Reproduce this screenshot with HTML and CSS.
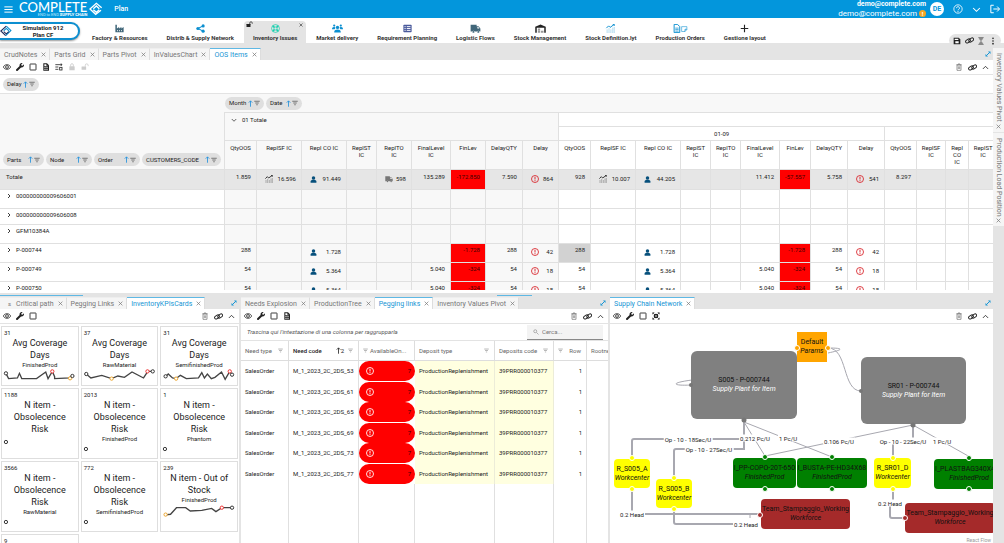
FILE: index.html
```html
<!DOCTYPE html>
<html lang="it">
<head>
<meta charset="utf-8">
<title>Complete - Plan</title>
<link rel="stylesheet" href="styles.css">
</head>
<body>
<svg class="sprite" aria-hidden="true">
  <symbol id="menu" viewBox="0 0 24 24"><path d="M1 5h22M1 12h22M1 19h22" stroke="currentColor" stroke-width="2.6"/></symbol>
  <symbol id="diamond" viewBox="0 0 42 38"><g fill="none" stroke="currentColor" stroke-width="4"><path d="M38 15 22 2 3 19l17 16 16-12"/><path d="M13 18 22 10l9 8M31 21l-9 8-9-8"/></g></symbol>
  <symbol id="diamond-duo" viewBox="0 0 42 38"><g fill="none" stroke-width="4"><path d="M22 2 3 19l17 16" stroke="#1d2c5e"/><path d="M22 2l16 15-18 18" stroke="#0d8fd0"/><path d="M13 18 22 10l9 8" stroke="#0d8fd0"/><path d="M31 21l-9 8-9-8" stroke="#1d2c5e"/></g></symbol>
  <symbol id="help" viewBox="0 0 24 24"><circle cx="12" cy="12" r="10" fill="none" stroke="currentColor" stroke-width="2"/><path d="M8.500 10a3.500 3.500 0 1 1 5 3c-1 .6-1.500 1-1.500 2.200" fill="none" stroke="currentColor" stroke-width="2"/><circle cx="12" cy="18" r="1.300" fill="currentColor"/></symbol>
  <symbol id="down" viewBox="0 0 24 24"><path d="m3 8 9 9 9-9" fill="none" stroke="currentColor" stroke-width="2.800"/></symbol>
  <symbol id="up" viewBox="0 0 24 24"><path d="m3 17 9-9 9 9" fill="none" stroke="currentColor" stroke-width="2.800"/></symbol>
  <symbol id="right" viewBox="0 0 24 24"><path d="m8 4 8 8-8 8" fill="none" stroke="currentColor" stroke-width="3.500"/></symbol>
  <symbol id="logout" viewBox="0 0 24 24"><path d="M9 3H2v18h7M8 12h14M17 6l6 6-6 6" fill="none" stroke="currentColor" stroke-width="2.400"/></symbol>
  <symbol id="industry" viewBox="0 0 24 24"><path d="M1 2h4v10l6-4v4l6-4v4l6-4v14H1z" fill="currentColor"/><path d="M6 16h2v3H6zM11 16h2v3h-2zM16 16h2v3h-2z" fill="#fff"/></symbol>
  <symbol id="share" viewBox="0 0 24 24"><path d="M19 5 5 12l14 7" fill="none" stroke="currentColor" stroke-width="2.800"/><circle cx="5" cy="12" r="4.200" fill="currentColor"/><circle cx="19" cy="5" r="4.200" fill="currentColor"/><circle cx="19" cy="19" r="4.200" fill="currentColor"/></symbol>
  <symbol id="ring" viewBox="0 0 24 24"><g fill="none" stroke="currentColor" stroke-width="2"><circle cx="12" cy="12" r="10.500"/><circle cx="12" cy="12" r="4"/><path d="m5 5 4 4M19 5l-4 4M5 19l4-4M19 19l-4-4" stroke-width="4"/></g></symbol>
  <symbol id="users" viewBox="0 0 30 24"><g fill="currentColor"><circle cx="6" cy="4" r="3"/><circle cx="24" cy="4" r="3"/><circle cx="15" cy="9" r="4.500"/><path d="M0 14c0-4 2-6 5-6s4 1 4 3l-2 3zM30 14c0-4-2-6-5-6s-4 1-4 3l2 3zM6 23c0-6 3-8 9-8s9 2 9 8z"/></g></symbol>
  <symbol id="list" viewBox="0 0 24 24"><path d="M3 2h18q2 0 2 2v16q0 2-2 2H3q-2 0-2-2V4q0-2 2-2z" fill="currentColor"/><path d="M4 7h3M10 7h10M4 12h3M10 12h10M4 17h3M10 17h10" stroke="#fff" stroke-width="2.500"/></symbol>
  <symbol id="truck" viewBox="0 0 28 24"><path d="M1 2h16v4h5l5 6v8h-2a4 4 0 0 0-7 0h-6a4 4 0 0 0-7 0H1z" fill="currentColor"/><path d="M19 8h2.500l3 4H19z" fill="#fff"/><circle cx="8.500" cy="21" r="2.600" fill="currentColor"/><circle cx="21.500" cy="21" r="2.600" fill="currentColor"/></symbol>
  <symbol id="warehouse" viewBox="0 0 28 24"><path d="M0 23V7l14-6 14 6v16h-4V10H4v13z" fill="currentColor"/><path d="M7 12h6v5H7zM7 18h6v5H7zM15 18h7v5h-7z" fill="#999"/></symbol>
  <symbol id="chart" viewBox="0 0 24 24"><path d="m1 11 6-6 4 4L22 1M22 5V1h-4" fill="none" stroke="currentColor" stroke-width="2.600"/><path d="M3 23v-8M8 23V12M13 23v-8M18 23V10M22 23V8" stroke="currentColor" stroke-width="2.400" stroke-dasharray="2 1" opacity=".55"/></symbol>
  <symbol id="docs" viewBox="0 0 38 24"><g fill="none" stroke="currentColor"><path d="M2 1h9l6 6v16H2z" stroke-width="2.600"/><path d="M5 11h9M5 15h9M5 19h9" stroke-width="2"/><path d="M22 7h14v8l-5 5h-9z" stroke-width="1.500"/><path d="M36 14h-5v6" stroke-width="2"/></g></symbol>
  <symbol id="plus" viewBox="0 0 24 24"><path d="M12 2v20M2 12h20" stroke="currentColor" stroke-width="3"/></symbol>
  <symbol id="save" viewBox="0 0 24 24"><path d="M2 2h15l5 5v15H2z" fill="currentColor"/><path d="M5 5h11v4H5zM7 13h10v6H7z" fill="#fff"/></symbol>
  <symbol id="link" viewBox="0 0 28 24"><g fill="none" stroke="currentColor" stroke-width="3"><rect x="1" y="9" width="16" height="9" rx="4.500" transform="rotate(-35 9 13)"/><rect x="11" y="6" width="16" height="9" rx="4.500" transform="rotate(-35 19 10)"/></g></symbol>
  <symbol id="hourglass" viewBox="0 0 24 24"><path d="M4 2h16M4 22h16" stroke="currentColor" stroke-width="3"/><path d="M6 3c0 6 5 6 5 9s-5 3-5 9h12c0-6-5-6-5-9s5-3 5-9z" fill="currentColor" opacity=".8"/></symbol>
  <symbol id="dots" viewBox="0 0 24 24"><g fill="currentColor"><circle cx="12" cy="4" r="2.500"/><circle cx="12" cy="12" r="2.500"/><circle cx="12" cy="20" r="2.500"/></g></symbol>
  <symbol id="eye" viewBox="0 0 24 24"><path fill="none" stroke="currentColor" stroke-width="2.200" d="M1 12c2.500-5 6-7 11-7s8.500 2 11 7c-2.500 5-6 7-11 7s-8.500-2-11-7z"/><circle cx="12" cy="12" r="4.500" fill="none" stroke="currentColor" stroke-width="2.200"/><circle cx="12" cy="12" r="1.500" fill="currentColor"/></symbol>
  <symbol id="wrench" viewBox="0 0 512 512"><path fill="currentColor" d="M507.730 109.100c-2.240-9.030-13.540-12.090-20.120-5.510l-74.360 74.360-67.880-11.310-11.310-67.880 74.360-74.360c6.620-6.620 3.430-17.900-5.660-20.160-47.380-11.740-99.550.91-136.580 37.930-39.640 39.640-50.550 97.100-34.050 147.200L18.740 402.760c-24.990 24.990-24.990 65.510 0 90.500 24.990 24.990 65.510 24.990 90.500 0l213.210-213.210c50.120 16.710 107.470 5.680 147.370-34.220 37.070-37.070 49.700-89.320 37.910-136.730z"/></symbol>
  <symbol id="square" viewBox="0 0 24 24"><rect x="3" y="3" width="18" height="18" rx="1" fill="none" stroke="currentColor" stroke-width="2.600"/></symbol>
  <symbol id="xls" viewBox="0 0 24 24"><path d="M4 1h11l6 6v16H4z" fill="currentColor"/><path d="M7 4h6v4h4v2H7zM7 13h4v3H7zM13 13h4v3h-4zM7 18h4v2H7zM13 18h4v2h-4z" fill="#fff"/></symbol>
  <symbol id="tune" viewBox="0 0 24 24"><g fill="none" stroke="currentColor" stroke-width="2.400"><path d="M1 5h20M17 1l4 4-4 4M1 12h9M1 19h9"/><rect x="14" y="13" width="7" height="8"/></g></symbol>
  <symbol id="lock" viewBox="0 0 24 24"><rect x="4" y="10" width="16" height="12" rx="1" fill="currentColor"/><path d="M8 11V6a4 4 0 0 1 8 0v5" fill="none" stroke="currentColor" stroke-width="2.500"/></symbol>
  <symbol id="unlock" viewBox="0 0 28 24"><rect x="2" y="10" width="16" height="12" rx="1" fill="currentColor"/><path d="M15 11V6a5 5 0 0 1 10 0v3" fill="none" stroke="currentColor" stroke-width="2.800"/></symbol>
  <symbol id="trash" viewBox="0 0 24 24"><path d="M6 6h12v16H6zM4 5h16M9 3h6M10 10v8M14 10v8" fill="none" stroke="currentColor" stroke-width="2.200"/></symbol>
  <symbol id="expand" viewBox="0 0 24 24"><path d="M12 2h10v10zM2 12v10h10z" fill="currentColor"/><path d="M6 18 18 6" stroke="currentColor" stroke-width="4"/></symbol>
  <symbol id="filter" viewBox="0 0 24 24"><path d="M1 5h22M5 12h14M9 19h6" stroke="currentColor" stroke-width="4"/></symbol>
  <symbol id="arrow" viewBox="0 0 16 24"><path d="M8 23V3M2 9l6-6 6 6" fill="none" stroke="currentColor" stroke-width="2.800"/></symbol>
  <symbol id="person" viewBox="0 0 24 24"><circle cx="12" cy="7" r="6" fill="currentColor"/><path d="M7 13h10l5 4v6H2v-6z" fill="currentColor"/></symbol>
  <symbol id="alert" viewBox="0 0 24 24"><circle cx="12" cy="12" r="10.500" fill="none" stroke="currentColor" stroke-width="2.600"/><path d="M12 5.500v8M12 15.500v3" stroke="currentColor" stroke-width="2.800"/></symbol>
  <symbol id="search" viewBox="0 0 24 24"><circle cx="9" cy="9" r="6" fill="none" stroke="currentColor" stroke-width="2.500"/><path d="m14 14 8 8" stroke="currentColor" stroke-width="2.500"/></symbol>
  <symbol id="focus" viewBox="0 0 24 24"><path d="M2 7V2h5M17 2h5v5M22 17v5h-5M7 22H2v-5M3 3l18 18M21 3 3 21" fill="none" stroke="currentColor" stroke-width="2"/><circle cx="12" cy="12" r="7" fill="currentColor"/><circle cx="12" cy="12" r="2.500" fill="#fff"/></symbol>
  <symbol id="x" viewBox="0 0 24 24"><path d="m3 3 18 18M21 3 3 21" stroke="currentColor" stroke-width="3.400"/></symbol>
</svg>

<header class="topbar">
  <button class="btn" aria-label="Menu"><svg class="ic i9"><use href="#menu"/></svg></button>
  <div class="brand"><div class="brand-words"><span class="brand-name">COMPLETE</span><span class="brand-sub">END to END <b>SUPPLY CHAIN</b></span></div><svg class="brand-mark"><use href="#diamond"/></svg></div>
  <span class="section">Plan</span>
  <div class="account"><b>demo@complete.com</b><span>demo@complete.com <i class="warn">!</i></span></div>
  <span class="avatar">DE</span>
  <button class="btn" aria-label="Guida"><svg class="ic i10"><use href="#help"/></svg></button>
  <button class="btn" aria-label="Apri"><svg class="ic i9"><use href="#down"/></svg></button>
  <button class="btn" aria-label="Esci"><svg class="ic i10"><use href="#logout"/></svg></button>
</header>

<nav class="nav">
  <button class="sim"><svg class="sim-mark"><use href="#diamond-duo"/></svg><span>Simulation 912<br>Plan CF</span></button>
  <a class="nav-item c-slate" href="#"><svg><use href="#industry"/></svg><span>Factory &amp; Resources</span></a>
  <a class="nav-item c-blue" href="#"><svg><use href="#share"/></svg><span>Distrib &amp; Supply Network</span></a>
  <a class="nav-item c-teal active" href="#"><svg><use href="#ring"/></svg><span>Inventory Issues</span><i class="pin"><svg class="ic i7"><use href="#unlock"/></svg></i><i class="shut"><svg class="ic i4"><use href="#x"/></svg></i></a>
  <a class="nav-item c-blue" href="#"><svg><use href="#users"/></svg><span>Market delivery</span></a>
  <a class="nav-item c-indigo" href="#"><svg><use href="#list"/></svg><span>Requirement Planning</span></a>
  <a class="nav-item c-slate" href="#"><svg><use href="#truck"/></svg><span>Logistic Flows</span></a>
  <a class="nav-item c-dark" href="#"><svg><use href="#warehouse"/></svg><span>Stock Management</span></a>
  <a class="nav-item c-blue" href="#"><svg><use href="#chart"/></svg><span>Stock Definition.lyt</span></a>
  <a class="nav-item c-blue" href="#"><svg class="wide"><use href="#docs"/></svg><span>Production Orders</span></a>
  <a class="nav-item c-dark" href="#"><svg><use href="#plus"/></svg><span>Gestione layout</span></a>
  <div class="float-tools">
    <button class="btn" aria-label="Salva"><svg class="ic i8"><use href="#save"/></svg></button>
    <button class="btn" aria-label="Collega"><svg class="ic i9"><use href="#link"/></svg></button>
    <button class="btn" aria-label="Attesa"><svg class="ic i8 muted"><use href="#hourglass"/></svg></button>
    <button class="btn" aria-label="Altro"><svg class="ic i8"><use href="#dots"/></svg></button>
  </div>
</nav>

<div class="work">
<main class="main">
  <section class="panel upper">
    <div class="tabs">
      <button class="tab">CrudNotes<svg><use href="#x"/></svg></button><button class="tab">Parts Grid<svg><use href="#x"/></svg></button><button class="tab">Parts Pivot<svg><use href="#x"/></svg></button><button class="tab">InValuesChart<svg><use href="#x"/></svg></button><button class="tab on">OOS Items<svg><use href="#x"/></svg></button>
      <svg class="ic i6 grow-ic"><use href="#expand"/></svg>
    </div>
    <div class="tools">
      <svg class="ic i8"><use href="#eye"/></svg><svg class="ic i8"><use href="#wrench"/></svg><svg class="ic i8"><use href="#square"/></svg><svg class="ic i8"><use href="#xls"/></svg><svg class="ic i8"><use href="#tune"/></svg><svg class="ic i8 off"><use href="#lock"/></svg><svg class="ic i8 off"><use href="#unlock"/></svg>
      <span class="spring"></span>
      <svg class="ic i8 muted"><use href="#trash"/></svg><svg class="ic i9"><use href="#link"/></svg><svg class="ic i7"><use href="#up"/></svg>
    </div>
    <div class="chips filters"><button class="chip w36">Delay<span><svg class="asc"><use href="#arrow"/></svg><svg><use href="#filter"/></svg></span></button></div>
    <div class="chips colfields"><button class="chip w39">Month<span><svg class="asc"><use href="#arrow"/></svg><svg><use href="#filter"/></svg></span></button><button class="chip w36">Date<span><svg class="asc"><use href="#arrow"/></svg><svg><use href="#filter"/></svg></span></button></div>
    <div class="pivot-wrap">
    <table class="pivot">
      <colgroup><col class="p225"><col class="p32"><col class="p45"><col class="p45"><col class="p30"><col class="p35"><col class="p39"><col class="p35"><col class="p37"><col class="p36"><col class="p32"><col class="p45"><col class="p45"><col class="p30"><col class="p30"><col class="p39"><col class="p31"><col class="p37"><col class="p37"><col class="p32"><col class="p29"><col class="p23"><col class="p29"></colgroup>
      <thead>
        <tr class="h15"><td class="fields" rowspan="3"><div class="chips rowfields"><button class="chip w41">Parts<span><svg class="asc"><use href="#arrow"/></svg><svg><use href="#filter"/></svg></span></button><button class="chip w46">Node<span><svg class="asc"><use href="#arrow"/></svg><svg><use href="#filter"/></svg></span></button><button class="chip w46">Order<span><svg class="asc"><use href="#arrow"/></svg><svg><use href="#filter"/></svg></span></button><button class="chip w79">CUSTOMERS_CODE<span><svg class="asc"><use href="#arrow"/></svg><svg><use href="#filter"/></svg></span></button></div></td>
          <th class="t grp" colspan="9" rowspan="2"><svg class="ic i6"><use href="#down"/></svg>01 Totale</th><th colspan="13"></th></tr>
        <tr class="h14"><th class="day" colspan="9">01-09</th><th colspan="4"></th></tr>
        <tr class="h29"><th class="t">QtyOOS</th><th class="t">ReplSF IC</th><th class="t">Repl CO IC</th><th class="t">ReplST IC</th><th class="t">ReplTO IC</th><th class="t">FinalLevel IC</th><th class="t">FinLev</th><th class="t">DelayQTY</th><th class="t">Delay</th><th>QtyOOS</th><th>ReplSF IC</th><th>Repl CO IC</th><th>ReplST IC</th><th>ReplTO IC</th><th>FinalLevel IC</th><th>FinLev</th><th>DelayQTY</th><th>Delay</th><th>QtyOOS</th><th>ReplSF IC</th><th>Repl CO IC</th><th>ReplST IC</th></tr>
      </thead>
      <tbody>
        <tr class="sum h20"><td class="name">Totale</td><td>1.859</td><td><div class="pair"><svg class="ic i8"><use href="#chart"/></svg>16.596</div></td><td><div class="pair"><svg class="ic i7 navy"><use href="#person"/></svg>91.449</div></td><td></td><td><div class="pair"><svg class="ic i8 muted"><use href="#truck"/></svg>598</div></td><td>135.289</td><td class="bad">-172.850</td><td>7.590</td><td><div class="pair"><svg class="ic i8 red"><use href="#alert"/></svg>864</div></td><td>928</td><td><div class="pair"><svg class="ic i8"><use href="#chart"/></svg>10.007</div></td><td><div class="pair"><svg class="ic i7 navy"><use href="#person"/></svg>44.205</div></td><td></td><td></td><td>11.412</td><td class="bad">-57.557</td><td>5.758</td><td><div class="pair"><svg class="ic i8 red"><use href="#alert"/></svg>541</div></td><td>8.297</td><td></td><td></td><td></td></tr>
        <tr class="h19"><td class="name"><svg class="ic i6"><use href="#right"/></svg>000000000009606001</td><td class="t"></td><td class="t"></td><td class="t"></td><td class="t"></td><td class="t"></td><td class="t"></td><td class="t"></td><td class="t"></td><td class="t"></td><td></td><td></td><td></td><td></td><td></td><td></td><td></td><td></td><td></td><td></td><td></td><td></td><td></td></tr>
        <tr class="h16"><td class="name"><svg class="ic i6"><use href="#right"/></svg>000000000009606008</td><td class="t"></td><td class="t"></td><td class="t"></td><td class="t"></td><td class="t"></td><td class="t"></td><td class="t"></td><td class="t"></td><td class="t"></td><td></td><td></td><td></td><td></td><td></td><td></td><td></td><td></td><td></td><td></td><td></td><td></td><td></td></tr>
        <tr class="h19"><td class="name"><svg class="ic i6"><use href="#right"/></svg>GFM10384A</td><td class="t"></td><td class="t"></td><td class="t"></td><td class="t"></td><td class="t"></td><td class="t"></td><td class="t"></td><td class="t"></td><td class="t"></td><td></td><td></td><td></td><td></td><td></td><td></td><td></td><td></td><td></td><td></td><td></td><td></td><td></td></tr>
        <tr class="h19"><td class="name"><svg class="ic i6"><use href="#right"/></svg>P-000744</td><td class="t">288</td><td class="t"></td><td class="t"><div class="pair"><svg class="ic i7 navy"><use href="#person"/></svg>1.728</div></td><td class="t"></td><td class="t"></td><td class="t"></td><td class="bad">-1.728</td><td class="t">288</td><td class="t"><div class="pair"><svg class="ic i8 red"><use href="#alert"/></svg>42</div></td><td class="sel">288</td><td></td><td><div class="pair"><svg class="ic i7 navy"><use href="#person"/></svg>1.728</div></td><td></td><td></td><td></td><td class="bad">-1.728</td><td>288</td><td><div class="pair"><svg class="ic i8 red"><use href="#alert"/></svg>42</div></td><td></td><td></td><td></td><td></td></tr>
        <tr class="h19"><td class="name"><svg class="ic i6"><use href="#right"/></svg>P-000749</td><td class="t">54</td><td class="t"></td><td class="t"><div class="pair"><svg class="ic i7 navy"><use href="#person"/></svg>5.364</div></td><td class="t"></td><td class="t"></td><td class="t">5.040</td><td class="bad">-324</td><td class="t">54</td><td class="t"><div class="pair"><svg class="ic i8 red"><use href="#alert"/></svg>18</div></td><td>54</td><td></td><td><div class="pair"><svg class="ic i7 navy"><use href="#person"/></svg>5.364</div></td><td></td><td></td><td>5.040</td><td class="bad">-324</td><td>54</td><td><div class="pair"><svg class="ic i8 red"><use href="#alert"/></svg>18</div></td><td></td><td></td><td></td><td></td></tr>
        <tr class="h19"><td class="name"><svg class="ic i6"><use href="#right"/></svg>P-000750</td><td class="t">54</td><td class="t"></td><td class="t"><div class="pair"><svg class="ic i7 navy"><use href="#person"/></svg>5.364</div></td><td class="t"></td><td class="t"></td><td class="t">5.040</td><td class="bad">-324</td><td class="t">54</td><td class="t"><div class="pair"><svg class="ic i8 red"><use href="#alert"/></svg>18</div></td><td>54</td><td></td><td><div class="pair"><svg class="ic i7 navy"><use href="#person"/></svg>5.364</div></td><td></td><td></td><td>5.040</td><td class="bad">-324</td><td>54</td><td><div class="pair"><svg class="ic i8 red"><use href="#alert"/></svg>18</div></td><td></td><td></td><td></td><td></td></tr>
      </tbody>
    </table>
    </div>
  </section>

  <div class="split"><span class="mark first"></span><span class="mark second"></span></div>

  <div class="lower">
    <section class="panel">
      <div class="tabs low">
        <button class="tab lead"><small>s</small></button><button class="tab">Critical path<svg><use href="#x"/></svg></button><button class="tab">Pegging Links<svg><use href="#x"/></svg></button><button class="tab on">InventoryKPIsCards<svg><use href="#x"/></svg></button>
        <svg class="ic i6 grow-ic"><use href="#expand"/></svg>
      </div>
      <div class="tools">
        <svg class="ic i8"><use href="#eye"/></svg><svg class="ic i8"><use href="#wrench"/></svg><svg class="ic i8"><use href="#square"/></svg><span class="spring"></span><svg class="ic i8 muted"><use href="#trash"/></svg><svg class="ic i9"><use href="#link"/></svg><svg class="ic i7"><use href="#up"/></svg>
      </div>
      <div class="cards">
        <article class="card"><small>31</small><h3>Avg Coverage Days</h3><p>FinishedProd</p>
          <svg class="spark" viewBox="5 236 230 42"><polyline points="17,252 25,268 52,266 58,252 65,268 110,268 138,248 145,268 158,246 165,262 165,268 212,266 218,260"/><circle cx="17" cy="252" r="5"/><circle class="hi" cx="158" cy="246" r="5"/><circle class="lo" cx="212" cy="267" r="5"/><circle cx="219" cy="260" r="5"/></svg></article>
        <article class="card"><small>37</small><h3>Avg Coverage Days</h3><p>RawMaterial</p>
          <svg class="spark" viewBox="243 236 230 42"><polyline points="256,254 270,266 303,258 333,268 352,260 372,264 395,248 430,266 443,246 458,246"/><circle cx="256" cy="254" r="5"/><circle class="lo" cx="333" cy="268" r="5"/><circle class="hi" cx="442" cy="246" r="5"/><circle cx="458" cy="246" r="5"/></svg></article>
        <article class="card"><small>31</small><h3>Avg Coverage Days</h3><p>SemifinishedProd</p>
          <svg class="spark" viewBox="481 236 230 42"><polyline points="495,262 503,254 516,266 527,268 540,258 558,268 595,266 605,250 613,266 622,254 634,268 645,264 665,248 676,270 690,246 697,256"/><circle cx="495" cy="261" r="5"/><circle class="lo" cx="527" cy="268" r="5"/><circle class="hi" cx="690" cy="246" r="5"/><circle cx="697" cy="256" r="5"/></svg></article>
        <article class="card"><small>1188</small><h3>N item - Obsolecence Risk</h3><svg class="spark" viewBox="5 434 230 42"><circle cx="17" cy="455" r="5"/></svg></article>
        <article class="card"><small>2013</small><h3>N item - Obsolecence Risk</h3><p>FinishedProd</p><svg class="spark" viewBox="5 434 230 42"><circle cx="17" cy="455" r="5"/></svg></article>
        <article class="card"><small>1</small><h3>N item - Obsolecence Risk</h3><p>Phantom</p><svg class="spark" viewBox="5 434 230 42"><circle cx="17" cy="455" r="5"/></svg></article>
        <article class="card"><small>3566</small><h3>N item - Obsolecence Risk</h3><p>RawMaterial</p><svg class="spark" viewBox="5 434 230 42"><circle cx="17" cy="455" r="5"/></svg></article>
        <article class="card"><small>772</small><h3>N item - Obsolecence Risk</h3><p>SemifinishedProd</p><svg class="spark" viewBox="5 434 230 42"><circle cx="17" cy="455" r="5"/></svg></article>
        <article class="card"><small>239</small><h3>N item - Out of Stock</h3><p>FinishedProd</p>
          <svg class="spark" viewBox="481 636 230 42"><polyline points="495,672 510,670 528,650 556,650 570,660 605,658 635,652 648,662 666,650 697,650"/><circle class="lo" cx="495" cy="671" r="5"/><circle class="hi" cx="666" cy="650" r="5"/><circle cx="697" cy="650" r="5"/></svg></article>
        <article class="card"><small>9</small></article>
      </div>
    </section>

    <section class="panel">
      <div class="tabs low">
        <button class="tab">Needs Explosion<svg><use href="#x"/></svg></button><button class="tab">ProductionTree<svg><use href="#x"/></svg></button><button class="tab on">Pegging links<svg><use href="#x"/></svg></button><button class="tab">Inventory Values Pivot<svg><use href="#x"/></svg></button>
        <svg class="ic i6 grow-ic"><use href="#expand"/></svg>
      </div>
      <div class="tools">
        <svg class="ic i8"><use href="#eye"/></svg><svg class="ic i8"><use href="#wrench"/></svg><svg class="ic i8"><use href="#square"/></svg><svg class="ic i8"><use href="#xls"/></svg><span class="spring"></span><svg class="ic i8 muted"><use href="#trash"/></svg><svg class="ic i9"><use href="#link"/></svg><svg class="ic i7"><use href="#up"/></svg>
      </div>
      <div class="group-row"><em>Trascina qui l'intestazione di una colonna per raggrupparla</em>
        <label class="find"><svg class="ic i6"><use href="#search"/></svg><input type="text" placeholder="Cerca..." aria-label="Cerca"></label></div>
      <div class="links-wrap">
      <table class="links">
        <colgroup><col class="p48"><col class="p70"><col class="p56"><col class="p80"><col class="p59"><col class="p33"><col class="p60"></colgroup>
        <thead><tr>
          <th><div class="hd">Need type<svg><use href="#filter"/></svg></div></th>
          <th><div class="hd dark">Need code<span class="order"><svg class="up2"><use href="#arrow"/></svg>2</span><svg><use href="#filter"/></svg></div></th>
          <th><div class="hd start"><svg><use href="#filter"/></svg>AvailableOn...</div></th>
          <th><div class="hd">Deposit type<svg><use href="#filter"/></svg></div></th>
          <th><div class="hd">Deposits code<svg><use href="#filter"/></svg></div></th>
          <th><div class="hd"><svg><use href="#filter"/></svg>Row</div></th>
          <th><div class="hd">Rootneed</div></th></tr></thead>
        <tbody>
          <tr><td>SalesOrder</td><td>M_1_2023_2C_2DS_53</td><td class="cap"><div><svg class="ic i8"><use href="#alert"/></svg>7</div></td><td class="soft">ProductionReplenishment</td><td class="soft">39PRR000010377</td><td class="num">1</td><td></td></tr>
          <tr><td>SalesOrder</td><td>M_1_2023_2C_2DS_61</td><td class="cap"><div><svg class="ic i8"><use href="#alert"/></svg>7</div></td><td class="soft">ProductionReplenishment</td><td class="soft">39PRR000010377</td><td class="num">1</td><td></td></tr>
          <tr><td>SalesOrder</td><td>M_1_2023_2C_2DS_65</td><td class="cap"><div><svg class="ic i8"><use href="#alert"/></svg>7</div></td><td class="soft">ProductionReplenishment</td><td class="soft">39PRR000010377</td><td class="num">1</td><td></td></tr>
          <tr><td>SalesOrder</td><td>M_1_2023_2C_2DS_69</td><td class="cap"><div><svg class="ic i8"><use href="#alert"/></svg>7</div></td><td class="soft">ProductionReplenishment</td><td class="soft">39PRR000010377</td><td class="num">1</td><td></td></tr>
          <tr><td>SalesOrder</td><td>M_1_2023_2C_2DS_73</td><td class="cap"><div><svg class="ic i8"><use href="#alert"/></svg>7</div></td><td class="soft">ProductionReplenishment</td><td class="soft">39PRR000010377</td><td class="num">1</td><td></td></tr>
          <tr><td>SalesOrder</td><td>M_1_2023_2C_2DS_77</td><td class="cap"><div><svg class="ic i8"><use href="#alert"/></svg>7</div></td><td class="soft">ProductionReplenishment</td><td class="soft">39PRR000010377</td><td class="num">1</td><td></td></tr>
          <tr class="rest"><td></td><td></td><td></td><td></td><td></td><td></td><td></td></tr>
        </tbody>
      </table>
      </div>
    </section>

    <section class="panel">
      <div class="tabs low">
        <button class="tab on">Supply Chain Network<svg><use href="#x"/></svg></button>
        <svg class="ic i6 grow-ic"><use href="#expand"/></svg>
      </div>
      <div class="tools">
        <svg class="ic i8"><use href="#eye"/></svg><svg class="ic i8"><use href="#wrench"/></svg><svg class="ic i8"><use href="#square"/></svg><svg class="ic i8"><use href="#focus"/></svg><span class="spring"></span><svg class="ic i8 muted"><use href="#trash"/></svg><svg class="ic i9"><use href="#link"/></svg><svg class="ic i7"><use href="#up"/></svg>
      </div>
      <div class="canvas">
        <svg class="edges" viewBox="0 0 383 218" width="383" height="218">
          <g class="thick"><path d="M134 98v17H24q-2 0-2 2v20M134 98v27H66q-2 0-2 2v28M22 165v25h128M64 185v13q0 2 2 2h60M303 101v16h-20v20M283 165v14h-3v13q0 2 2 2h12"/></g>
          <g class="thin"><path d="m134 98 21 34M134 98l88 35M303 101l-148 31M303 101l57 32M218 24c20 0 14 43 33 43M218 24c18 0 14 2 0 5M81 61c-18 1-22-2 1-5M140 194v-3"/></g>
        </svg>
        <span class="lbl" style="left:78px;top:115px">Op - 10 - 18Sec/U</span>
        <span class="lbl" style="left:99px;top:125px">Op - 10 - 27Sec/U</span>
        <span class="lbl" style="left:145px;top:114px">0.212 Pc/U</span>
        <span class="lbl" style="left:178px;top:114px">1 Pc/U</span>
        <span class="lbl" style="left:229px;top:117px">0.106 Pc/U</span>
        <span class="lbl" style="left:293px;top:117px">Op - 10 - 22Sec/U</span>
        <span class="lbl" style="left:332px;top:117px">1 Pc/U</span>
        <span class="lbl" style="left:22px;top:190px">0.2 Head</span>
        <span class="lbl" style="left:136px;top:200px">0.2 Head</span>
        <span class="lbl" style="left:280px;top:179px">0.2 Head</span>
        <div class="node orange" style="left:187px;top:8px;width:30px;height:30px"><span>Default</span><em>Params</em></div>
        <div class="node gray" style="left:81px;top:27px;width:106px;height:68px"><span>S005 - P-000744</span><em>Supply Plant for Item</em></div>
        <div class="node gray" style="left:251px;top:33px;width:105px;height:67px"><span>SR01 - P-000744</span><em>Supply Plant for Item</em></div>
        <div class="node yellow" style="left:4px;top:135px;width:36px;height:29px"><span>R_S005_A</span><em>Workcenter</em></div>
        <div class="node yellow" style="left:46px;top:155px;width:36px;height:29px"><span>R_S005_B</span><em>Workcenter</em></div>
        <div class="node green" style="left:123px;top:134px;width:63px;height:30px"><span>I_PP-COPO-20T-650</span><em>FinishedProd</em></div>
        <div class="node green" style="left:187px;top:134px;width:70px;height:30px"><span>I_BUSTA-PE-HD34X68</span><em>FinishedProd</em></div>
        <div class="node yellow" style="left:264px;top:134px;width:37px;height:30px"><span>R_SR01_D</span><em>Workcenter</em></div>
        <div class="node green" style="left:324px;top:135px;width:70px;height:30px"><span>I_PLASTBAG340X400</span><em>FinishedProd</em></div>
        <div class="node brown" style="left:151px;top:175px;width:89px;height:30px"><span>Team_Stampaggio_Working</span><em>Workforce</em></div>
        <div class="node brown" style="left:295px;top:179px;width:90px;height:30px"><span>Team_Stampaggio_Working</span><em>Workforce</em></div>
        <svg class="edges" viewBox="0 0 383 218" width="383" height="218"><g stroke="#fff" stroke-width="1"><g fill="orange"><circle cx="187" cy="24" r="2.500"/><circle cx="218" cy="24" r="2.500"/></g><g fill="#ff0"><circle cx="22" cy="134" r="2.500"/><circle cx="22" cy="165" r="2.500"/><circle cx="64" cy="154" r="2.500"/><circle cx="64" cy="185" r="2.500"/><circle cx="283" cy="134" r="2.500"/><circle cx="283" cy="165" r="2.500"/></g><g fill="green"><circle cx="155" cy="133" r="2.500"/><circle cx="155" cy="165" r="2.500"/><circle cx="222" cy="133" r="2.500"/><circle cx="222" cy="165" r="2.500"/><circle cx="359" cy="134" r="2.500"/><circle cx="359" cy="165" r="2.500"/></g><g fill="brown"><circle cx="150" cy="191" r="2.500"/><circle cx="295" cy="194" r="2.500"/></g></g><g fill="#777"><circle cx="134" cy="96" r="2.500"/><circle cx="303" cy="101" r="2.500"/><circle cx="81" cy="61" r="2"/><circle cx="251" cy="67" r="2"/></g></svg>
        <a class="credit" href="#">React Flow</a>
      </div>
    </section>
  </div>
</main>
<aside class="rail">
  <button class="rail-tab"><span>Inventory Values Pivot</span><svg class="ic i5"><use href="#x"/></svg></button>
  <button class="rail-tab"><span>Production Load Position</span><svg class="ic i5"><use href="#x"/></svg></button>
</aside>
</div>
</body>
</html>
```

FILE: styles.css
```css
* { box-sizing: border-box; }
body {
  margin: 0;
  height: 100vh;
  overflow: hidden;
  display: flex;
  flex-direction: column;
  background: #e4e4e4;
  color: #222;
  font-family: Roboto, "Liberation Sans", sans-serif;
  font-size: 6px;
  line-height: 8px;
}
button { font: inherit; color: inherit; border: 0; padding: 0; background: none; cursor: pointer; }
a { color: inherit; text-decoration: none; }
.sprite { position: absolute; width: 0; height: 0; }
.ic { flex: none; display: block; color: #222; }
.i4 { width: 4px; height: 4px; }
.i5 { width: 5px; height: 5px; }
.i6 { width: 6px; height: 6px; }
.i7 { width: 7px; height: 7px; }
.i8 { width: 8px; height: 8px; }
.i9 { width: 9px; height: 9px; }
.i10 { width: 10px; height: 10px; }
.muted { color: #777; }
.off { color: #ccc; }
.navy { color: #07507c; }
.red { color: #d9242b; }

.topbar { flex: none; height: 18px; padding: 0 4px; display: flex; align-items: center; background: #0396dc; color: #fff; overflow: hidden; }
.topbar .ic { color: #fff; }
.topbar .btn { margin-left: 9px; }
.topbar .btn:first-child { margin-left: 0; }
.brand { display: flex; align-items: center; gap: 2px; margin-left: 6px; }
.brand-words { display: flex; flex-direction: column; align-items: flex-end; }
.brand-name { font: 500 13px/12px Lato, sans-serif; }
.brand-sub { font-size: 4px; line-height: 4px; color: #bfe6fa; }
.brand-sub b { color: #fff; }
.brand-mark { width: 14px; height: 14px; }
.section { margin-left: 11px; font-size: 7px; font-weight: 500; }
.account { margin-left: auto; display: flex; flex-direction: column; align-items: flex-end; font-size: 8px; line-height: 9px; }
.account b { font-size: 7px; font-weight: 700; }
.warn { display: inline-block; width: 7px; height: 7px; border-radius: 50%; background: #f5a623; font: 700 6px/7px Roboto, sans-serif; text-align: center; }
.avatar { width: 14px; height: 14px; margin-left: 4px; border-radius: 50%; background: #fff; color: #0396dc; font-size: 7px; font-weight: 700; line-height: 14px; text-align: center; }

.nav { position: relative; flex: none; height: 25px; display: flex; align-items: flex-end; gap: 1px; background: #fff; font-weight: 700; }
.sim { align-self: center; width: 80px; height: 18px; margin-right: 2px; display: flex; align-items: center; border: 2px solid #0d8fd0; border-left: 0; border-radius: 0 9px 9px 0; background: #fff; box-shadow: 0 1px 2px #999; font-size: 6px; font-weight: 700; line-height: 7px; }
.sim span { flex: 1; padding-right: 4px; }
.sim-mark { width: 12px; height: 12px; }
.nav-item { position: relative; height: 22px; padding: 3px 9px 0; display: flex; flex-direction: column; align-items: center; gap: 1px; white-space: nowrap; }
.nav-item > svg { width: 11px; height: 9px; }
.nav-item > svg.wide { width: 15px; }
.nav-item > span { color: #333; font-size: 6px; line-height: 8px; }
.active { background: #e4e4e4; border-radius: 4px 4px 0 0; }
.pin { position: absolute; top: 0; left: 2px; }
.shut { position: absolute; top: 2px; right: 3px; }
.c-slate { color: #41677a; }
.c-blue { color: #0b8fd0; }
.c-teal { color: #17cfae; }
.c-indigo { color: #4a5a9c; }
.c-dark { color: #222; }
.float-tools { position: absolute; right: 3px; top: 16px; z-index: 2; width: 52px; height: 13px; padding: 0 4px; display: flex; align-items: center; justify-content: space-between; border-radius: 7px; background: #e4e4e4; }

.work { flex: 1; min-height: 0; display: flex; }
.main { flex: 1; min-width: 0; display: flex; flex-direction: column; }
.panel { min-width: 0; min-height: 0; display: flex; flex-direction: column; background: #fff; overflow: hidden; }
.upper { flex: none; height: 250px; padding-bottom: 3px; }
.tabs { flex: none; height: 17px; padding-right: 2px; display: flex; align-items: flex-end; background: #e4e4e4; }
.tabs.low { height: 12px; }
.tab { height: 12px; padding: 0 3px 0 4px; display: flex; align-items: center; gap: 4px; background: #f5f5f5; border-right: 1px solid #ddd; border-top: 1px solid #eee; color: #777; font-size: 7px; white-space: nowrap; }
.tab svg { width: 5px; height: 5px; color: #777; }
.tab.on { background: #fff; color: #1795d4; border-top-color: #5fb8e4; }
.tab.lead { padding: 0 1px 0 8px; border-right: 0; }
.tab.lead small { font-size: 6px; }
.grow-ic { margin: 0 0 3px auto; color: #1795d4; }
.tools { flex: none; height: 15px; padding: 0 4px 0 3px; display: flex; align-items: center; gap: 5px; border-bottom: 1px solid #e3e3e3; }
.spring { flex: 1; }
.chips { display: flex; align-items: center; gap: 2px; }
.chip { height: 13px; padding: 0 4px; display: flex; align-items: center; justify-content: space-between; border-radius: 7px; background: #dfdfdf; white-space: nowrap; }
.chip span { display: flex; align-items: center; gap: 1px; }
.chip svg { width: 6px; height: 6px; color: #777; }
.chip .asc { width: 5px; height: 7px; color: #1f90dd; }
.w36 { width: 36px; } .w39 { width: 39px; } .w41 { width: 41px; } .w46 { width: 46px; } .w79 { width: 79px; }
.filters { flex: none; height: 18px; padding-left: 3px; }
.colfields { flex: none; height: 19px; padding-left: 225px; background: #f8f8f8; border-top: 1px solid #e3e3e3; }
.rowfields { padding: 0 0 3px 3px; }

.pivot-wrap { flex: 1; min-height: 0; overflow: hidden; }
.pivot { width: 998px; table-layout: fixed; border-spacing: 0; }
.pivot th, .pivot td { height: inherit; padding: 0; vertical-align: top; border-right: 1px solid #e0e0e0; border-bottom: 1px solid #e0e0e0; }
.pivot th { padding: 3px 4px 0; font-weight: 400; line-height: 7px; text-align: center; border-top: 0; }
.pivot thead tr:first-child th { border-top: 1px solid #e0e0e0; }
.pivot td { padding: 2px 5px 0 0; text-align: right; }
.pivot .t { background: #f8f8f8; }
.pivot .fields { padding: 0; vertical-align: bottom; background: #f8f8f8; }
.pivot .grp { padding: 3px 0 0 6px; text-align: left; }
.grp svg { display: inline-block; margin-right: 5px; vertical-align: -1px; }
.pivot .name { padding: 2px 0 0 6px; text-align: left; background: #fff; }
.name svg { display: inline-block; margin-right: 4px; vertical-align: -1px; }
.pivot .sum td { padding-top: 3px; background: #e6e6e6; }
.pivot td.bad, .pivot .sum td.bad { background: #f00; color: #400000; }
.pivot .sel { background: #d2d2d2; }
.pair { display: flex; align-items: center; justify-content: space-between; padding: 2px 0 0 8px; }
.h14 { height: 14px; } .h15 { height: 15px; } .h16 { height: 16px; } .h19 { height: 19px; } .h20 { height: 20px; } .h29 { height: 29px; }
.p23 { width: 23px; } .p29 { width: 29px; } .p30 { width: 30px; } .p31 { width: 31px; } .p32 { width: 32px; } .p33 { width: 33px; }
.p35 { width: 35px; } .p36 { width: 36px; } .p37 { width: 37px; } .p39 { width: 39px; } .p45 { width: 45px; } .p48 { width: 48px; }
.p56 { width: 56px; } .p59 { width: 59px; } .p60 { width: 60px; } .p70 { width: 70px; } .p80 { width: 80px; } .p225 { width: 225px; }

.split { position: relative; flex: none; height: 4px; }
.mark { position: absolute; top: 2px; height: 1px; background: #5fb8e4; }
.first { left: 0; width: 83px; }
.second { left: 50%; width: 35px; }
.lower { flex: 1; min-height: 0; display: grid; grid-template-columns: 239fr 367fr 383fr; gap: 2px; }

.cards { flex: 1; min-height: 0; overflow: hidden; padding: 2px 1px 0; display: grid; grid-template-columns: repeat(3, 1fr); grid-template-rows: 60px; grid-auto-rows: 71px; gap: 2px; }
.card { padding: 2px 0 0; border: 1px solid #dedede; text-align: center; overflow: hidden; }
.card small { display: block; padding-left: 2px; font-size: 6px; line-height: 8px; text-align: left; }
.card h3 { margin: 0; padding: 0 8px; font-size: 9px; font-weight: 400; line-height: 12px; }
.card p { margin: 0; font-size: 6px; line-height: 7px; }
.spark { display: block; width: 100%; height: 14px; }
.spark polyline { fill: none; stroke: #444; stroke-width: 4; }
.spark circle { fill: #fff; stroke: #333; stroke-width: 3; }
.spark .hi { stroke: #e33; }
.spark .lo { stroke: #eba52e; }

.group-row { flex: none; height: 17px; padding: 0 5px 0 6px; display: flex; align-items: center; justify-content: space-between; color: #555; border-bottom: 1px solid #e3e3e3; }
.find { width: 76px; height: 15px; padding: 0 6px; display: flex; align-items: center; gap: 3px; background: #f3f3f3; border-bottom: 1px solid #888; }
.find .ic { color: #888; }
.find input { width: 100%; min-width: 0; padding: 0; border: 0; outline: 0; background: none; font: 6px/8px Roboto, sans-serif; }
.find input::placeholder { color: #777; opacity: 1; }
.links-wrap { flex: 1; min-height: 0; overflow: hidden; }
.links { width: 406px; table-layout: fixed; border-spacing: 0; }
.links th { height: 20px; padding: 0; border-right: 1px solid #ddd; border-bottom: 1px solid #ddd; font-weight: 400; color: #666; }
.hd { padding: 0 5px 0 4px; display: flex; align-items: center; justify-content: space-between; white-space: nowrap; }
.hd.start { justify-content: flex-start; gap: 2px; }
.hd.dark { font-weight: 500; color: #222; }
.hd > svg { width: 5px; height: 5px; color: #aaa; }
.order { display: flex; align-items: center; margin-left: auto; margin-right: 4px; font-weight: 400; }
.up2 { width: 5px; height: 7px; }
.links td { height: 20px; padding: 0 0 0 4px; border-right: 1px solid #e0e0e0; white-space: nowrap; }
.links tr:nth-child(even) td { height: 21px; }
.links .soft { background: #ffffe0; border-color: #ececd8; }
.links .num { padding: 0 4px 0 0; text-align: right; }
.links td.cap { padding: 0; border: 0; }
.cap div { height: 20px; padding: 0 4px 0 7px; display: flex; align-items: center; justify-content: space-between; border-radius: 10px; background: #f00; color: #400000; }
.cap .ic { color: #fff; }
.links .rest td { height: 80px; }

.canvas { position: relative; flex: 1; min-height: 0; overflow: hidden; background: #fff; }
.edges { position: absolute; left: 0; top: 0; }
.thick path { fill: none; stroke: #a8a8b0; stroke-width: 2; }
.thin path { fill: none; stroke: #a8a8b0; stroke-width: 1; }
.lbl { position: absolute; transform: translate(-50%, -50%); padding: 0 1px; background: #fff; line-height: 7px; white-space: nowrap; }
.node { position: absolute; display: flex; flex-direction: column; align-items: center; justify-content: center; border-radius: 4px; overflow: hidden; color: #111; font-size: 7px; line-height: 9px; white-space: nowrap; }
.orange { background: #ffa500; border-radius: 0; }
.gray { background: #808080; border-radius: 6px; }
.gray em { color: #fff; }
.yellow { background: #ff0; }
.green { background: #008000; }
.brown { background: #a52a2a; }
.credit { position: absolute; right: 2px; bottom: -1px; color: #999; font-size: 5px; }

.rail { flex: none; width: 11px; padding-top: 5px; display: flex; flex-direction: column; align-items: stretch; gap: 1px; }
.rail-tab { padding: 5px 0 3px; display: flex; flex-direction: column; align-items: center; gap: 2px; background: #f5f5f5; color: #777; font-size: 7px; line-height: 9px; }
.rail-tab span { writing-mode: vertical-rl; white-space: nowrap; }
.rail-tab .ic { color: #777; }
```
